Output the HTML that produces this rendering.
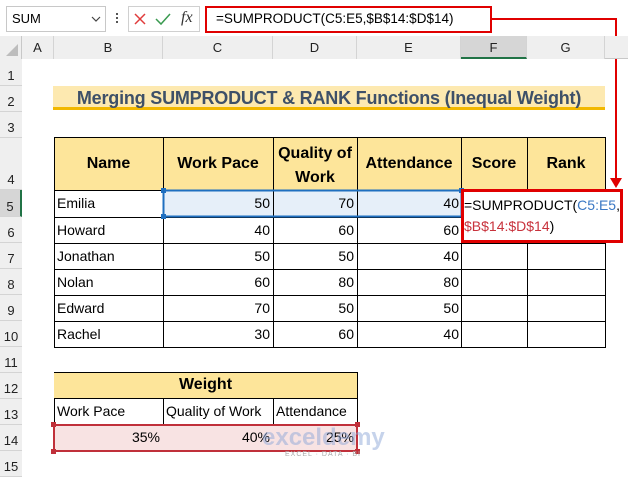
<!DOCTYPE html>
<html><head><style>
body{margin:0;width:628px;height:478px;background:#fff;position:relative;overflow:hidden;font-family:"Liberation Sans",Arial,sans-serif;}
.a{position:absolute;box-sizing:border-box;}
.t{position:absolute;font-size:14px;color:#000;white-space:nowrap;}
.hdr{position:absolute;background:#efefef;color:#222;font-size:13px;text-align:center;box-sizing:border-box;}
</style></head><body>
<div class="a" style="left:0;top:0;width:628px;height:36px;background:#fff;"></div>
<div class="a" style="left:6px;top:6px;width:100px;height:26px;border:1px solid #c8c8c8;"></div>
<div class="t" style="left:12px;top:11px;font-size:13px;">SUM</div>
<svg class="a" style="left:91px;top:15px" width="10" height="8"><path d="M1 2 L5 6 L9 2" stroke="#444" fill="none" stroke-width="1.2"/></svg>
<div class="a" style="left:116px;top:13px;width:2px;height:2px;background:#555;box-shadow:0 4px 0 #555,0 8px 0 #555;"></div>
<div class="a" style="left:128px;top:6px;width:72px;height:26px;border:1px solid #d0d0d0;"></div>
<svg class="a" style="left:133px;top:12px" width="14" height="14"><path d="M2 2 L12 12 M12 2 L2 12" stroke="#e03c3c" stroke-width="1.5"/></svg>
<svg class="a" style="left:155px;top:12px" width="16" height="14"><path d="M1 7 L6 12 L15 2" stroke="#3a9a50" fill="none" stroke-width="1.5"/></svg>
<div class="t" style="left:181px;top:9px;font-family:'Liberation Serif',serif;font-style:italic;font-size:16px;color:#333;">fx</div>
<div class="a" style="left:205px;top:6px;width:287px;height:27px;border:2.5px solid #e00000;"></div>
<div class="t" style="left:216px;top:11px;font-size:13.5px;">=SUMPRODUCT(C5:E5,$B$14:$D$14)</div>
<div class="a" style="left:492px;top:18px;width:125px;height:2px;background:#e00000;"></div>
<div class="a" style="left:615px;top:18px;width:2px;height:162px;background:#e00000;"></div>
<svg class="a" style="left:610px;top:178px" width="12" height="10"><path d="M0 0 L12 0 L6 10Z" fill="#e00000"/></svg>
<div class="hdr" style="left:0;top:36px;width:628px;height:23px;border-bottom:1px solid #c8c8c8;"></div>
<div class="a" style="left:0;top:36px;width:22px;height:440px;background:#efefef;border-right:1px solid #c8c8c8;"></div>
<div id="cols"></div>
<svg class="a" style="left:4px;top:42px" width="14" height="14"><path d="M14 2 L14 14 L2 14Z" fill="#bdbdbd"/></svg>
<script>
var xs=[22,54,163,273,357,461,527,605,640],L="ABCDEFG",h="";
for(var i=0;i<7;i++){h+='<div class="hdr" style="left:'+xs[i]+'px;top:36px;width:'+(xs[i+1]-xs[i])+'px;height:23px;line-height:23px;border-right:1px solid #d4d4d4;'+(i==5?'background:#d6d6d6;border-bottom:2px solid #217346;':'')+'">'+L[i]+'</div>';}
var ry=[59,86,112,138,190,217,243,269,295,321,347,373,399,425,451,477];
for(var r=0;r<15;r++){var y0=ry[r],y1=ry[r+1];h+='<div class="hdr" style="left:0;top:'+y0+'px;width:22px;height:'+(y1-y0)+'px;padding-top:'+(y1-y0-18)+'px;border-bottom:1px solid #d4d4d4;'+(r==4?'background:#d6d6d6;border-right:2px solid #217346;':'')+'">'+(r+1)+'</div>';}
document.getElementById('cols').innerHTML=h;
</script>
<div class="a" style="left:53px;top:86px;width:552px;height:24px;background:#fde9b0;border-bottom:3px solid #f2b800;"></div>
<div class="t" style="left:53px;width:552px;text-align:center;top:88px;font-size:18px;font-weight:bold;color:#3e5068;letter-spacing:-0.2px;">Merging SUMPRODUCT &amp; RANK Functions (Inequal Weight)</div>
<div class="a" style="left:54px;top:137px;width:551px;height:53px;background:#fde59a;"></div>
<div class="a" style="left:163px;top:190px;width:298px;height:27px;background:#e6eff9;"></div>
<svg class="a" style="left:0;top:0" width="628" height="478">
<g stroke="#000" stroke-width="1">
<path d="M54.5 137.5H605.5V347.5H54.5Z" fill="none"/>
<path d="M163.5 137V347M273.5 137V347M357.5 137V347M461.5 137V347M527.5 137V347"/>
<path d="M54 190.5H605M54 217.5H605M54 243.5H605M54 269.5H605M54 295.5H605M54 321.5H605"/>
</g>
<rect x="163.5" y="190.5" width="298" height="26" fill="none" stroke="#1f6fc0" stroke-width="2"/>
<g fill="#1f6fc0"><rect x="161" y="188" width="5" height="5"/><rect x="459" y="188" width="5" height="5"/><rect x="161" y="214" width="5" height="5"/></g>
<path d="M54.5 372.5H357.5V451.5H54.5Z" fill="none" stroke="#000"/>
<path d="M54 398.5H357M163.5 399V425M273.5 399V425" stroke="#000"/>
<path d="M163.5 426V450M273.5 426V450" stroke="#000"/>
</svg>
<div class="a" style="left:54px;top:373px;width:303px;height:25px;background:#fde59a;"></div>
<div class="a" style="left:54px;top:426px;width:303px;height:24px;background:#f8e3e3;"></div>
<div class="a" style="left:53px;top:424px;width:305px;height:28px;border:2px solid #c0303a;"></div>
<div class="a" style="left:51px;top:422px;width:5px;height:5px;background:#c0303a;"></div>
<div class="a" style="left:355px;top:422px;width:5px;height:5px;background:#c0303a;"></div>
<div class="a" style="left:51px;top:449px;width:5px;height:5px;background:#c0303a;"></div>
<div class="a" style="left:355px;top:449px;width:5px;height:5px;background:#c0303a;"></div>
<div id="cells"></div>
<script>
var c="",B='font-weight:bold;font-size:16px;text-align:center;';
function T(x,y,w,s,st){c+='<div class="t" style="left:'+x+'px;top:'+y+'px;width:'+w+'px;'+(st||'')+'">'+s+'</div>';}
T(54,155,109,"Name",B);T(163,155,110,"Work Pace",B);T(273,142,84,"Quality of<br>Work",B+"line-height:24px;");
T(357,155,104,"Attendance",B);T(461,155,66,"Score",B);T(527,155,78,"Rank",B);
var d=[["Emilia",50,70,40],["Howard",40,60,60],["Jonathan",50,50,40],["Nolan",60,80,80],["Edward",70,50,50],["Rachel",30,60,40]];
for(var i=0;i<6;i++){var y=ry[i+4]+5;T(57,y,100,d[i][0]);T(163,y,107,d[i][1],"text-align:right");T(273,y,81,d[i][2],"text-align:right");T(357,y,102,d[i][3],"text-align:right");}
T(54,376,303,"Weight",B);
T(57,403,100,"Work Pace");T(166,403,105,"Quality of Work");T(276,403,80,"Attendance");
T(54,429,106,"35%","text-align:right");T(163,429,107,"40%","text-align:right");T(273,429,81,"25%","text-align:right");
document.getElementById('cells').innerHTML=c;
</script>
<div class="a" style="left:461px;top:189px;width:162px;height:54px;background:#fff;border:3px solid #e00000;"></div>
<div class="t" style="left:464px;top:195px;line-height:21px;">=SUMPRODUCT(<span style="color:#3a78c4">C5:E5</span>,<br><span style="color:#c8323c">$B$14:$D$14</span>)</div>
<div class="t" style="left:262px;top:424px;font-size:24px;font-weight:bold;color:#8fa8d8;opacity:.5;">exceldemy</div>
<div class="t" style="left:285px;top:451px;font-size:7px;color:#aaa;letter-spacing:1px;">EXCEL · DATA · BI</div>
</body></html>
